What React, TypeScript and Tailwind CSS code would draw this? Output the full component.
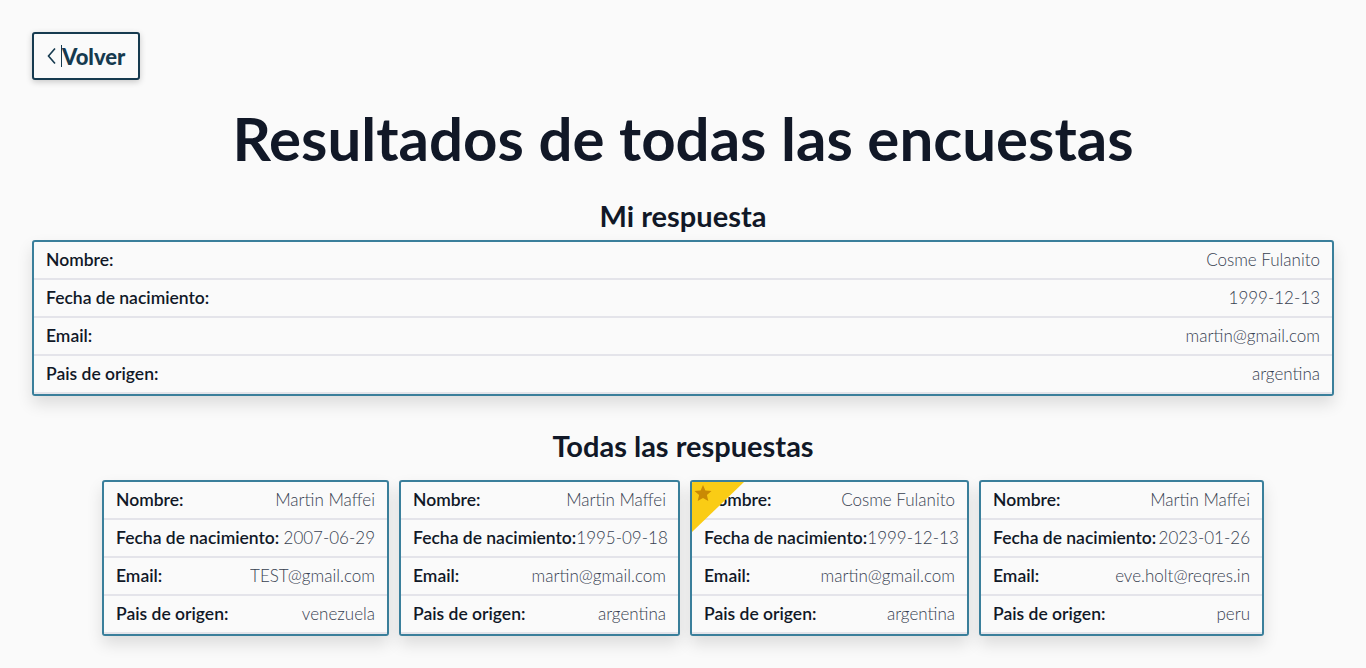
import React from "react";

type Resp = { nombre: string; fecha: string; email: string; pais: string; w: number; star?: boolean };

const data: Resp[] = [
  { nombre: "Martin Maffei", fecha: "2007-06-29", email: "TEST@gmail.com", pais: "venezuela", w: 287 },
  { nombre: "Martin Maffei", fecha: "1995-09-18", email: "martin@gmail.com", pais: "argentina", w: 281 },
  { nombre: "Cosme Fulanito", fecha: "1999-12-13", email: "martin@gmail.com", pais: "argentina", w: 279, star: true },
  { nombre: "Martin Maffei", fecha: "2023-01-26", email: "eve.holt@reqres.in", pais: "peru", w: 285 },
];

const font = { fontFamily: 'Lato, "Open Sans", sans-serif' };

function Row({ label, value, clip }: { label: string; value: string; clip?: boolean }) {
  return (
    <div className="flex h-[38px] items-center justify-between border-b-2 border-[#e4e4ea] px-3 leading-6">
      <span className="shrink-0 whitespace-nowrap text-[17.5px] font-semibold text-[#111827]">{label}</span>
      <span
        className={
          clip
            ? "min-w-0 overflow-hidden whitespace-nowrap text-right text-[17px] font-light text-[#374151]"
            : "shrink-0 whitespace-nowrap text-right text-[17px] font-light text-[#374151]"
        }
      >
        {value}
      </span>
    </div>
  );
}

function Card({ r, style }: { r: Resp; style?: React.CSSProperties }) {
  return (
    <div
      className="relative overflow-hidden rounded-[3px] border-2 border-[#3a7f9b] bg-[#fafafa] shadow-[0_8px_16px_rgba(0,0,0,0.12)]"
      style={style}
    >
      {r.star && (
        <div className="pointer-events-none absolute left-0 top-0 z-10 h-[50px] w-[52px]">
          <svg width="52" height="50" viewBox="0 0 52 50">
            <polygon points="0,0 52,0 0,50" fill="#facc15" />
            <polygon
              points="11,3 13.4,8.6 19.5,9.1 14.9,13.1 16.3,19 11,15.9 5.7,19 7.1,13.1 2.5,9.1 8.6,8.6"
              fill="#ca8a04"
            />
          </svg>
        </div>
      )}
      <Row label="Nombre:" value={r.nombre} />
      <Row label="Fecha de nacimiento:" value={r.fecha} />
      <Row label="Email:" value={r.email} clip />
      <Row label="Pais de origen:" value={r.pais} />
    </div>
  );
}

export default function App() {
  return (
    <div className="min-h-[668px] bg-[#fafafa] px-8 pt-8 pb-8" style={font}>
      <button className="flex h-12 w-[108px] items-center rounded-[3px] border-2 border-[#163a4f] bg-[#fafafa] pl-[12px] text-[22px] font-black text-[#163a4f] shadow-[0_2px_6px_rgba(0,0,0,0.2)]">
        <svg width="12" height="18" viewBox="0 0 12 18" className="mr-[3px]">
          <polyline points="9,1.5 2.5,9 9,16.5" fill="none" stroke="#163a4f" strokeWidth="1.6" />
        </svg>
        <span className="h-[22px] w-px bg-[#163a4f]" />
        <span>Volver</span>
      </button>
      <h1 className="mt-[26px] text-center text-[60px] font-bold leading-[64px] text-[#111827]">
        Resultados de todas las encuestas
      </h1>
      <h2 className="mt-[28px] text-center text-[29px] font-bold leading-9 text-[#111827]">Mi respuesta</h2>
      <div className="mt-[6px]">
        <Card r={{ nombre: "Cosme Fulanito", fecha: "1999-12-13", email: "martin@gmail.com", pais: "argentina", w: 0 }} />
      </div>
      <h2 className="mt-[32px] text-center text-[29px] font-bold leading-9 text-[#111827]">Todas las respuestas</h2>
      <div className="mt-[16px] flex justify-center gap-[10px]">
        {data.map((r, i) => (
          <Card key={i} r={r} style={{ width: r.w }} />
        ))}
      </div>
    </div>
  );
}
